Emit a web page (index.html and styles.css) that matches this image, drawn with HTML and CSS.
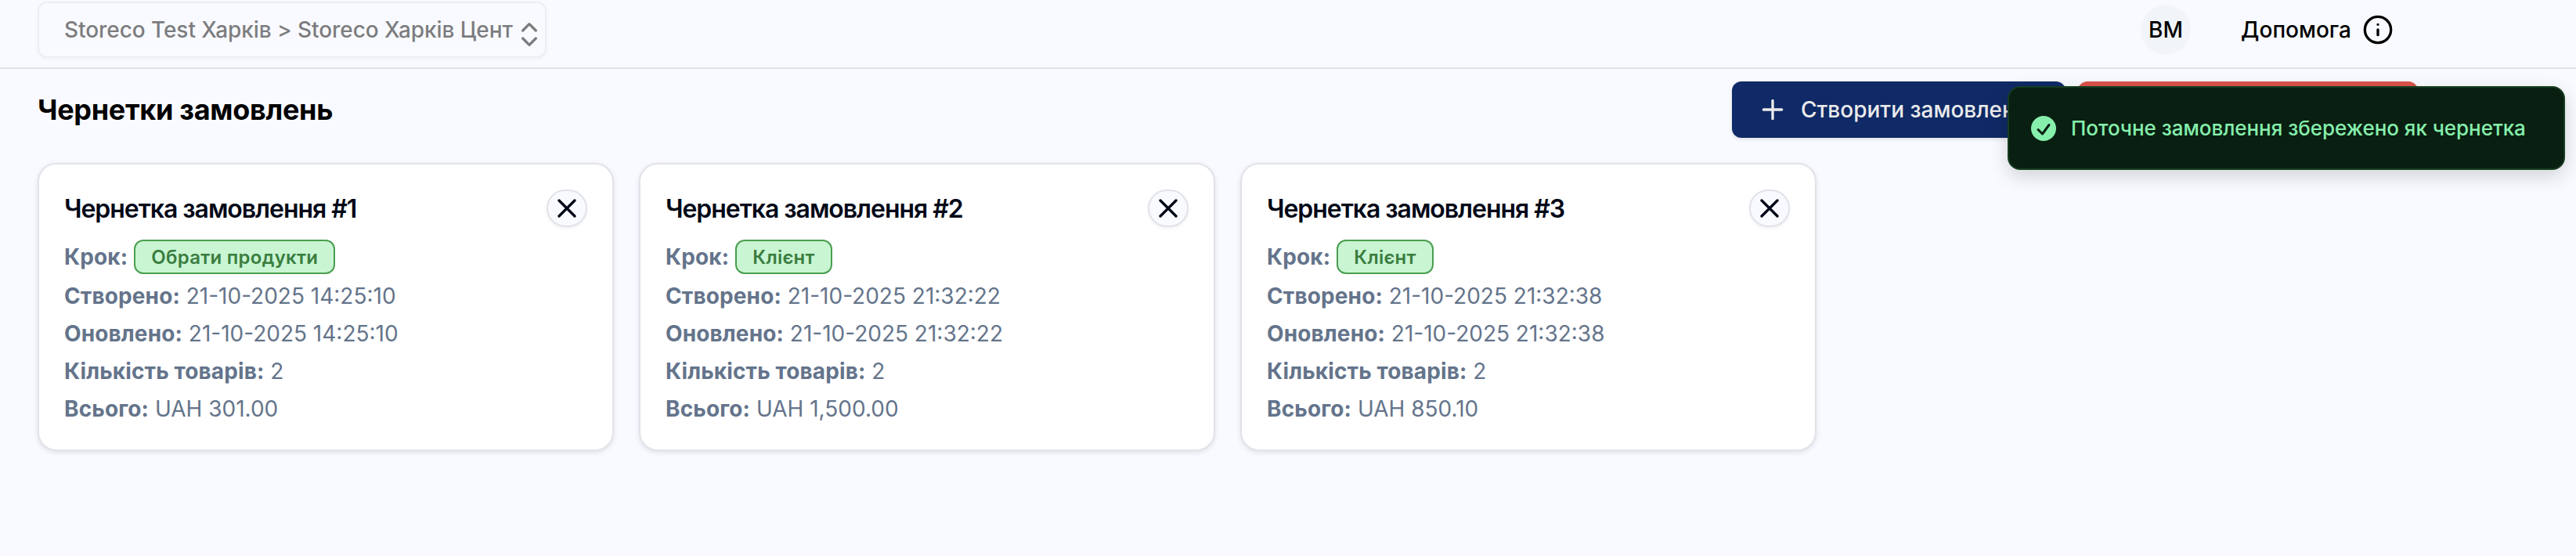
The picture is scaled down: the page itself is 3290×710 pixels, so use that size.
FILE: index.html
```
<!DOCTYPE html>
<html lang="uk">

<head>
  <meta charset="UTF-8" />
  <title>Чернетки замовлень</title>
  <link rel="stylesheet" href="styles.css">
</head>

<body>
  <header class="topbar">
    <button class="store-select" disabled>
      <span class="store-name">Storeco Test Харків &gt; Storeco Харків Цент</span>
      <svg class="icon" viewBox="0 0 24 24"><path d="m7 15 5 5 5-5M7 9l5-5 5 5" /></svg>
    </button>
    <div class="user">
      <span class="avatar">ВМ</span>
      <a class="help">
        <span>Допомога</span>
        <svg class="icon" viewBox="0 0 24 24"><circle cx="12" cy="12" r="10" /><path d="M12 16v-4M12 8h.01" /></svg>
      </a>
    </div>
  </header>

  <main>
    <div class="page-head">
      <h1>Чернетки замовлень</h1>
      <div class="actions">
        <button class="btn btn-primary">
          <svg class="icon" viewBox="0 0 24 24"><path d="M5 12h14M12 5v14" /></svg>
          <span>Створити замовлення</span>
        </button>
        <button class="btn btn-danger"></button>
      </div>
    </div>

    <div class="drafts">
      <div class="card">
        <div class="card-head">
          <h2>Чернетка замовлення #1</h2>
          <button class="close"><svg class="icon" viewBox="0 0 24 24"><path d="M18 6 6 18M6 6l12 12" /></svg></button>
        </div>
        <div class="step"><b>Крок:</b><span class="badge">Обрати продукти</span></div>
        <p><b>Створено:</b> 21-10-2025 14:25:10</p>
        <p><b>Оновлено:</b> 21-10-2025 14:25:10</p>
        <p><b>Кількість товарів:</b> 2</p>
        <p><b>Всього:</b> UAH 301.00</p>
      </div>

      <div class="card">
        <div class="card-head">
          <h2>Чернетка замовлення #2</h2>
          <button class="close"><svg class="icon" viewBox="0 0 24 24"><path d="M18 6 6 18M6 6l12 12" /></svg></button>
        </div>
        <div class="step"><b>Крок:</b><span class="badge">Клієнт</span></div>
        <p><b>Створено:</b> 21-10-2025 21:32:22</p>
        <p><b>Оновлено:</b> 21-10-2025 21:32:22</p>
        <p><b>Кількість товарів:</b> 2</p>
        <p><b>Всього:</b> UAH 1,500.00</p>
      </div>

      <div class="card">
        <div class="card-head">
          <h2>Чернетка замовлення #3</h2>
          <button class="close"><svg class="icon" viewBox="0 0 24 24"><path d="M18 6 6 18M6 6l12 12" /></svg></button>
        </div>
        <div class="step"><b>Крок:</b><span class="badge">Клієнт</span></div>
        <p><b>Створено:</b> 21-10-2025 21:32:38</p>
        <p><b>Оновлено:</b> 21-10-2025 21:32:38</p>
        <p><b>Кількість товарів:</b> 2</p>
        <p><b>Всього:</b> UAH 850.10</p>
      </div>
    </div>
  </main>

  <div class="toast">
    <svg class="toast-icon" viewBox="0 0 32 32"><circle cx="16" cy="16" r="16" /><path d="m9 17.5 5.5 5.5 8.5-11.5" /></svg>
    <span>Поточне замовлення збережено як чернетка</span>
  </div>
</body>

</html>
```
FILE: styles.css
```
* {
  box-sizing: border-box;
}

body {
  margin: 0;
  min-height: 100vh;
  background: #f9faff;
  color: #000;
  font-family: Inter, "Liberation Sans", sans-serif;
  font-size: 28px;
}

button {
  font: inherit;
  color: inherit;
}

.icon {
  width: 40px;
  height: 40px;
  flex: none;
  fill: none;
  stroke: currentColor;
  stroke-width: 2;
  stroke-linecap: round;
  stroke-linejoin: round;
}

.topbar {
  display: flex;
  justify-content: space-between;
  align-items: center;
  height: 88px;
  padding: 2px 233px 12px 48px;
  border-bottom: 2px solid #e2e3e9;
}

.store-select {
  display: flex;
  align-items: center;
  width: 650px;
  height: 72px;
  padding: 0 0 0 32px;
  border: 2px solid #e2e3e9;
  border-radius: 12px;
  background: #f9faff;
  box-shadow: 0 2px 4px rgba(0, 0, 0, 0.05);
  font-weight: 500;
  letter-spacing: -0.07px;
  white-space: nowrap;
  opacity: 0.5;
}

.store-name {
  width: 574px;
  text-align: left;
}

.store-select .icon {
  margin-top: 12px;
}

.user {
  display: flex;
  align-items: center;
  gap: 64px;
  font-weight: 500;
}

.avatar {
  display: flex;
  align-items: center;
  justify-content: center;
  width: 64px;
  height: 64px;
  border-radius: 50%;
  background: #f1f5f9;
}

.help {
  display: flex;
  align-items: center;
  gap: 14px;
}

.page-head {
  display: flex;
  justify-content: space-between;
  align-items: center;
  height: 72px;
  margin-top: 16px;
  padding: 0 202px 0 48px;
}

h1 {
  margin: 0;
  font-size: 36px;
  font-weight: 700;
  letter-spacing: -0.3px;
}

.actions {
  display: flex;
  gap: 16px;
}

.btn {
  display: flex;
  align-items: center;
  height: 72px;
  border: 0;
  border-radius: 12px;
  box-shadow: 0 2px 4px rgba(0, 0, 0, 0.1);
  font-weight: 500;
  white-space: nowrap;
}

.btn-primary {
  gap: 16px;
  width: 426px;
  padding: 0 32px;
  background: #0f2a66;
  color: #ebebeb;
}

.btn-danger {
  width: 434px;
  background: #dc524c;
}

.drafts {
  display: flex;
  gap: 32px;
  padding: 32px 48px;
}

.card {
  width: 736px;
  height: 368px;
  padding: 32px;
  border: 2px solid #e2e3e9;
  border-radius: 24px;
  background: #fff;
  box-shadow: 0 2px 6px rgba(0, 0, 0, 0.1);
  color: #64748b;
  line-height: 48px;
}

.card-head {
  display: flex;
  justify-content: space-between;
  align-items: center;
  height: 48px;
  color: #020817;
}

h2 {
  margin: 0;
  padding-top: 2px;
  font-size: 32px;
  font-weight: 600;
  letter-spacing: -0.033em;
}

.close {
  display: flex;
  align-items: center;
  justify-content: center;
  width: 52px;
  height: 48px;
  padding: 0;
  border: 2px solid #e2e3e9;
  border-radius: 26px;
  background: #f9faff;
  box-shadow: 0 2px 4px rgba(0, 0, 0, 0.05);
}

.step {
  display: flex;
  align-items: center;
  gap: 8px;
  height: 48px;
  margin: 14px 0 2px;
}

.badge {
  height: 44px;
  padding: 0 20px;
  border: 2px solid #4a9e50;
  border-radius: 12px;
  background: #c9f5d3;
  color: #3a7d3f;
  font-size: 24px;
  font-weight: 600;
  letter-spacing: 0.25px;
  line-height: 42px;
}

.card p {
  margin: 0;
}

.card b {
  font-weight: 700;
  letter-spacing: 0.12px;
}

.toast {
  position: absolute;
  top: 110px;
  right: 14px;
  display: flex;
  align-items: center;
  gap: 19px;
  width: 712px;
  height: 107px;
  padding: 0 28px;
  border: 2px solid #153d1f;
  border-radius: 16px;
  background: #091f11;
  box-shadow: 0 8px 24px rgba(0, 0, 0, 0.16);
  color: #86efac;
  font-size: 26px;
  font-weight: 500;
  letter-spacing: -0.05px;
  white-space: nowrap;
}

.toast-icon {
  width: 32px;
  height: 32px;
  flex: none;
  fill: #86efac;
}

.toast-icon path {
  fill: none;
  stroke: #091f11;
  stroke-width: 3;
  stroke-linecap: round;
  stroke-linejoin: round;
}
```
